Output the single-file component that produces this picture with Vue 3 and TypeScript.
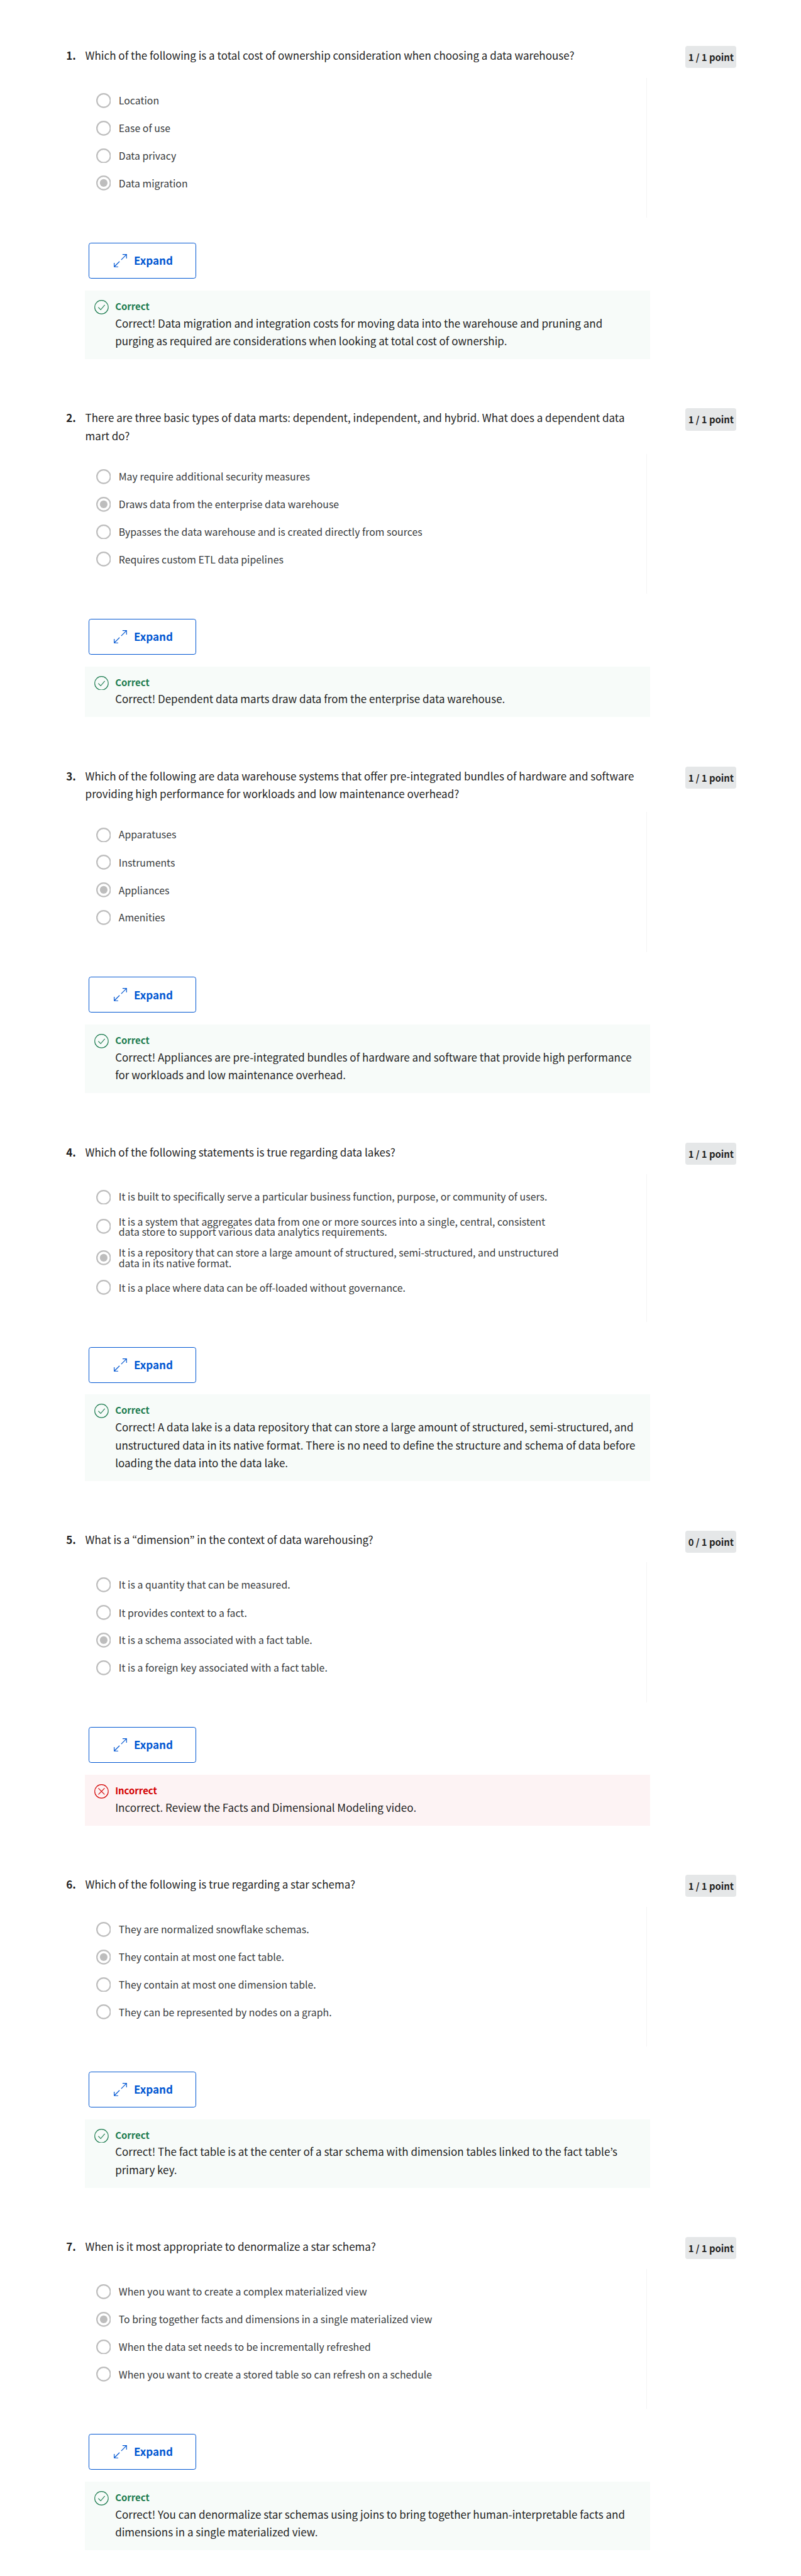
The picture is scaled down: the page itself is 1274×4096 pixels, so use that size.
<script setup lang="ts">
interface Question {
  prompt: string[]
  options: string[]
  chosen: number
  correct: boolean
  feedback: string[]
}

const questions: Question[] = [
  {
    prompt: ['Which of the following is a total cost of ownership consideration when choosing a data warehouse?'],
    options: ['Location', 'Ease of use', 'Data privacy', 'Data migration'],
    chosen: 3,
    correct: true,
    feedback: [
      'Correct! Data migration and integration costs for moving data into the warehouse and pruning and',
      'purging as required are considerations when looking at total cost of ownership.',
    ],
  },
  {
    prompt: [
      'There are three basic types of data marts: dependent, independent, and hybrid. What does a dependent data',
      'mart do?',
    ],
    options: [
      'May require additional security measures',
      'Draws data from the enterprise data warehouse',
      'Bypasses the data warehouse and is created directly from sources',
      'Requires custom ETL data pipelines',
    ],
    chosen: 1,
    correct: true,
    feedback: ['Correct! Dependent data marts draw data from the enterprise data warehouse.'],
  },
  {
    prompt: [
      'Which of the following are data warehouse systems that offer pre-integrated bundles of hardware and software',
      'providing high performance for workloads and low maintenance overhead?',
    ],
    options: ['Apparatuses', 'Instruments', 'Appliances', 'Amenities'],
    chosen: 2,
    correct: true,
    feedback: [
      'Correct! Appliances are pre-integrated bundles of hardware and software that provide high performance',
      'for workloads and low maintenance overhead.',
    ],
  },
  {
    prompt: ['Which of the following statements is true regarding data lakes?'],
    options: [
      'It is built to specifically serve a particular business function, purpose, or community of users.',
      'It is a system that aggregates data from one or more sources into a single, central, consistent\ndata store to support various data analytics requirements.',
      'It is a repository that can store a large amount of structured, semi-structured, and unstructured\ndata in its native format.',
      'It is a place where data can be off-loaded without governance.',
    ],
    chosen: 2,
    correct: true,
    feedback: [
      'Correct! A data lake is a data repository that can store a large amount of structured, semi-structured, and',
      'unstructured data in its native format. There is no need to define the structure and schema of data before',
      'loading the data into the data lake.',
    ],
  },
  {
    prompt: ['What is a “dimension” in the context of data warehousing?'],
    options: [
      'It is a quantity that can be measured.',
      'It provides context to a fact.',
      'It is a schema associated with a fact table.',
      'It is a foreign key associated with a fact table.',
    ],
    chosen: 2,
    correct: false,
    feedback: ['Incorrect. Review the Facts and Dimensional Modeling video.'],
  },
  {
    prompt: ['Which of the following is true regarding a star schema?'],
    options: [
      'They are normalized snowflake schemas.',
      'They contain at most one fact table.',
      'They contain at most one dimension table.',
      'They can be represented by nodes on a graph.',
    ],
    chosen: 1,
    correct: true,
    feedback: [
      'Correct! The fact table is at the center of a star schema with dimension tables linked to the fact table’s',
      'primary key.',
    ],
  },
  {
    prompt: ['When is it most appropriate to denormalize a star schema?'],
    options: [
      'When you want to create a complex materialized view',
      'To bring together facts and dimensions in a single materialized view',
      'When the data set needs to be incrementally refreshed',
      'When you want to create a stored table so can refresh on a schedule',
    ],
    chosen: 1,
    correct: true,
    feedback: [
      'Correct! You can denormalize star schemas using joins to bring together human-interpretable facts and',
      'dimensions in a single materialized view.',
    ],
  },
]
</script>

<template>
  <main class="quiz">
    <section v-for="(q, i) in questions" :key="i" class="question">
      <header class="head">
        <span class="number">{{ i + 1 }}.</span>
        <p class="prompt">{{ q.prompt.join('\n') }}</p>
        <span class="badge">{{ q.correct ? 1 : 0 }} / 1 point</span>
      </header>

      <div class="body">
        <ul class="options">
          <li v-for="(o, j) in q.options" :key="j" class="option">
            <svg class="radio" viewBox="0 0 25 25" aria-hidden="true">
              <circle cx="12.5" cy="12.5" r="11.3" fill="none" stroke="#bdbdbd" stroke-width="2.3" />
              <circle v-if="j === q.chosen" cx="12.5" cy="12.5" r="6.4" fill="#bdbdbd" />
            </svg>
            <span class="label">{{ o }}</span>
          </li>
        </ul>

        <button class="expand" type="button">
          <svg class="expand-icon" viewBox="0 0 22 22" fill="none" stroke="currentColor" stroke-width="1.25" aria-hidden="true">
            <path d="M14.6.7h6.7v6.7M21.3.7 12.4 9.6M.7 14.6v6.7h6.7M.7 21.3l8.9-8.9" />
          </svg>
          Expand
        </button>

        <div class="feedback" :class="{ wrong: !q.correct }">
          <svg class="status" viewBox="0 0 24 24" fill="none" stroke="currentColor" stroke-width="1.2" aria-hidden="true">
            <circle cx="12" cy="12" r="11.3" />
            <path v-if="q.correct" d="m6.7 12.3 4 4 6.8-8" />
            <path v-else d="m6.8 6.8 10.4 10.4M17.2 6.8 6.8 17.2" />
          </svg>
          <div>
            <strong class="verdict">{{ q.correct ? 'Correct' : 'Incorrect' }}</strong>
            <p class="explain">{{ q.feedback.join('\n') }}</p>
          </div>
        </div>
      </div>
    </section>
  </main>
</template>

<style>
html {
  font-size: 9.515px;
  background: #fff;
}
</style>

<style scoped>
.quiz {
  box-sizing: border-box;
  height: 4096px;
  overflow: hidden;
  padding: 7.7rem 10.8rem 0 11.05rem;
  color: #1f1f1f;
  font-family: 'Noto Sans CJK KR', 'Noto Sans', sans-serif;
  font-size: 1.79rem;
  line-height: 3rem;
}
.question {
  margin-bottom: 8.24rem;
}
.head {
  display: flex;
  align-items: flex-start;
}
.number {
  flex: none;
  width: 3.2rem;
  padding-top: 0.08rem;
  font-weight: 700;
}
.prompt {
  flex: 1;
  margin: 0;
  padding-top: 0.08rem;
  margin-bottom: -0.08rem;
  white-space: pre;
}
.badge {
  box-sizing: border-box;
  flex: none;
  width: 8.5rem;
  height: 3.7rem;
  border-radius: 0.4rem;
  background: #e5e7e8;
  font-size: 1.567rem;
  font-weight: 700;
  line-height: 3.8rem;
  letter-spacing: -0.007rem;
  text-align: center;
  white-space: nowrap;
}
.body {
  width: 94.5rem;
  margin-left: 3.15rem;
}
.options {
  display: flex;
  flex-direction: column;
  gap: 1.74rem;
  width: 93.9rem;
  box-sizing: border-box;
  margin: 1.62rem 0 4.15rem;
  padding: 2.37rem 0 4.37rem 1.84rem;
  border-right: 1px solid #f3f3f3;
  list-style: none;
}
.option {
  display: flex;
  align-items: center;
  gap: 1.3rem;
  min-height: 2.86rem;
}
.radio {
  flex: none;
  width: 2.5rem;
  height: 2.5rem;
}
.label {
  color: #373a3c;
  font-size: 1.66rem;
  line-height: 1.75rem;
  letter-spacing: 0.005rem;
  white-space: pre;
}
.option + .option .label {
  padding-top: 0.1rem;
  margin-bottom: -0.1rem;
}
.expand {
  display: flex;
  align-items: center;
  box-sizing: border-box;
  gap: 1.2rem;
  width: 18rem;
  height: 5.98rem;
  margin: 0 0 1.99rem 0.62rem;
  padding: 0 0 0 4.07rem;
  border: 1px solid #0056d2;
  border-radius: 0.4rem;
  background: #fff;
  color: #0056d2;
  font: inherit;
  font-weight: 700;
}
.expand-icon {
  flex: none;
  width: 2.2rem;
  height: 2.2rem;
}
.feedback {
  display: flex;
  align-items: flex-start;
  gap: 1.1rem;
  padding: 1.57rem 0 1.51rem 1.55rem;
  background: #f7fbf9;
}
.status {
  flex: none;
  width: 2.4rem;
  height: 2.4rem;
  color: #1d7c50;
}
.verdict {
  display: block;
  margin-bottom: 0.2rem;
  color: #1d7c50;
  font-size: 1.567rem;
  line-height: 2.2rem;
}
.explain {
  margin: 0;
  white-space: pre;
}
.wrong {
  background: #fdf3f4;
}
.wrong .status,
.wrong .verdict {
  color: #d30001;
}
</style>
